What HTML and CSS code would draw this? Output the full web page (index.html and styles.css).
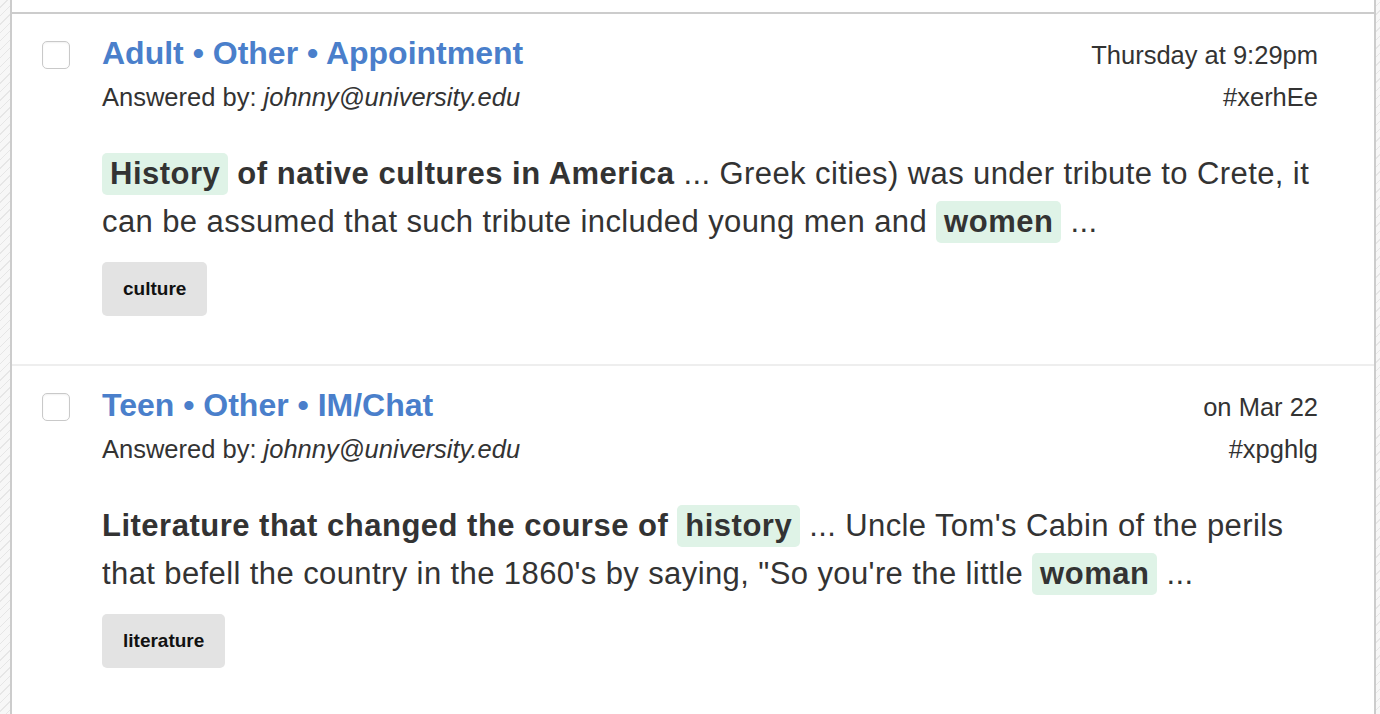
FILE: index.html
```html
<!DOCTYPE html>
<html>
<head>
<meta charset="utf-8">
<link rel="stylesheet" href="styles.css">
</head>
<body>
<div class="panel">
  <div class="panel-top"></div>

  <div class="item">
    <div class="check-col"><span class="checkbox"></span></div>
    <div class="content">
      <div class="row row-title">
        <a class="title">Adult • Other • Appointment</a>
        <span class="date">Thursday at 9:29pm</span>
      </div>
      <div class="row row-meta">
        <span class="answered">Answered by: <em>johnny@university.edu</em></span>
        <span class="hash">#xerhEe</span>
      </div>
      <p class="snippet"><mark class="hl">History</mark> <strong>of native cultures in America</strong> ... Greek cities) was under tribute to Crete, it can be assumed that such tribute included young men and <mark class="hl">women</mark> ...</p>
      <div class="tags"><span class="tag">culture</span></div>
    </div>
  </div>

  <div class="item">
    <div class="check-col"><span class="checkbox"></span></div>
    <div class="content">
      <div class="row row-title">
        <a class="title">Teen • Other • IM/Chat</a>
        <span class="date">on Mar 22</span>
      </div>
      <div class="row row-meta">
        <span class="answered">Answered by: <em>johnny@university.edu</em></span>
        <span class="hash">#xpghlg</span>
      </div>
      <p class="snippet"><strong>Literature that changed the course of</strong> <mark class="hl">history</mark> ... Uncle Tom's Cabin of the perils that befell the country in the 1860's by saying, "So you're the little <mark class="hl">woman</mark> ...</p>
      <div class="tags"><span class="tag">literature</span></div>
    </div>
  </div>
</div>
</body>
</html>
```

FILE: styles.css
```css
html, body {
  margin: 0;
  padding: 0;
  height: 100%;
}
body {
  font-family: "Liberation Sans", Arial, sans-serif;
  color: #333;
  background-color: #f7f7f7;
  background-image: repeating-linear-gradient(-45deg, #f7f7f7 0, #f7f7f7 5px, #e6e6e6 5px, #e6e6e6 6px);
  overflow: hidden;
}
.panel {
  margin-left: 10px;
  width: 1366px;
  box-sizing: border-box;
  min-height: 714px;
  background: #fff;
  border-left: 2px solid #cccccc;
  border-right: 2px solid #cccccc;
}
.panel-top {
  height: 12px;
  border-bottom: 2px solid #cccccc;
}
.item {
  display: flex;
  padding: 20px 56px 48px 30px;
  border-bottom: 2px solid #eeeeee;
}
.check-col {
  width: 28px;
  margin-right: 32px;
  flex: none;
}
.checkbox {
  display: block;
  width: 28px;
  height: 28px;
  margin-top: 7px;
  box-sizing: border-box;
  border: 1px solid #c9c9c9;
  border-radius: 5px;
  background: #fff;
  box-shadow: inset 0 1px 2px rgba(0,0,0,0.06);
}
.content {
  flex: 1;
  min-width: 0;
}
.row {
  display: flex;
  justify-content: space-between;
  align-items: baseline;
}
.row-title {
  line-height: 38px;
}
.title {
  font-size: 32px;
  font-weight: bold;
  color: #4a7fcb;
  text-decoration: none;
}
.date {
  font-size: 25.5px;
  color: #333;
}
.row-meta {
  margin-top: 8px;
  line-height: 30px;
  font-size: 25.5px;
}
.answered em {
  font-style: italic;
}
.snippet {
  margin: 38px 0 0 0;
  font-size: 31px;
  line-height: 48px;
  letter-spacing: 0.4px;
}
.snippet strong {
  font-weight: bold;
  letter-spacing: 0.5px;
}
.hl {
  background: #dff3e7;
  color: #333;
  font-weight: bold;
  letter-spacing: 0.5px;
  padding: 3px 8px 4px;
  border-radius: 5px;
}
.tags {
  margin-top: 16px;
  display: flex;
}
.tag {
  display: inline-flex;
  align-items: center;
  height: 54px;
  padding: 0 21px;
  background: #e3e3e3;
  border-radius: 5px;
  font-size: 19px;
  font-weight: bold;
  letter-spacing: 0;
  color: #111;
}
```
